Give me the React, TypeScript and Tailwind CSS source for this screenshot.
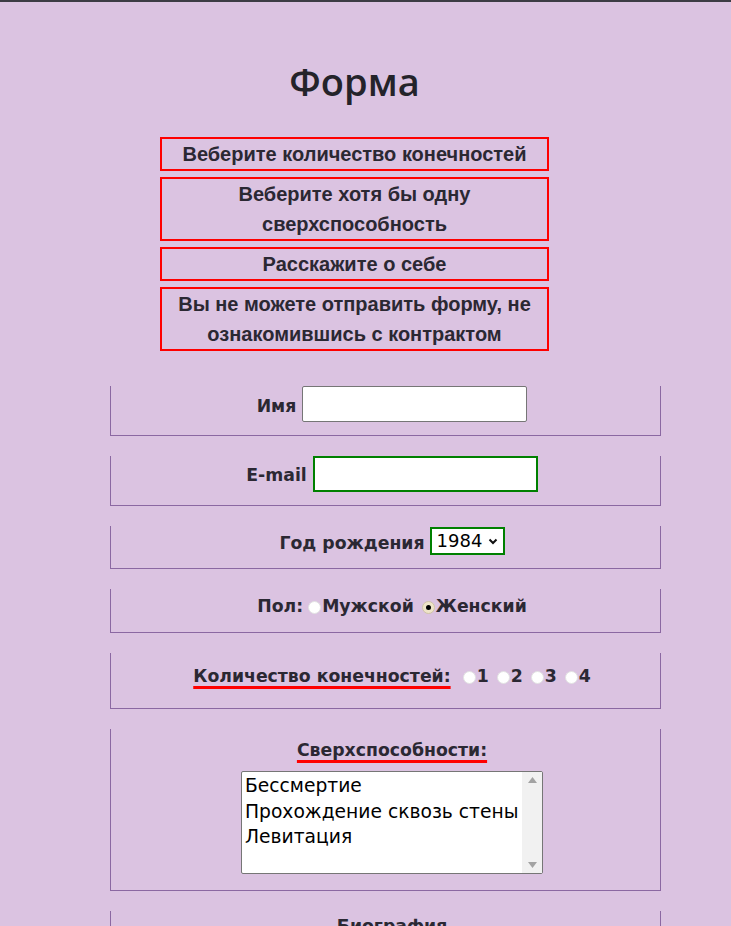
import React from "react";

const errors = [
  "Веберите количество конечностей",
  "Веберите хотя бы одну сверхспособность",
  "Расскажите о себе",
  "Вы не можете отправить форму, не ознакомившись с контрактом",
];

const powers = ["Бессмертие", "Прохождение сквозь стены", "Левитация"];

const label = "font-['DejaVu_Sans',sans-serif] font-bold text-[17.3px] text-[#2b2833]";

const Radio = ({ checked }: { checked?: boolean }) => (
  <span
    className={`inline-flex size-[13px] shrink-0 items-center justify-center rounded-full border ${
      checked ? "bg-[#efe4c8] border-[#cfc3a6]" : "bg-white border-[#e2e2e2]"
    }`}
  >
    {checked && <span className="size-[5px] rounded-full bg-black" />}
  </span>
);

const Field = ({ className, children }: { className: string; children: React.ReactNode }) => (
  <div className={`ml-[110px] w-[551px] border-x border-b border-[#8b68a2] pl-[13px] ${className}`}>
    {children}
  </div>
);

export default function App() {
  return (
    <div className="min-h-[926px] w-full border-t-2 border-[#3c3c44] bg-[#dbc3e1] pb-10">
      <div className="w-[709px]">
        <h1 className="pt-[57px] text-center font-['Open_Sans',sans-serif] text-[38px] font-semibold leading-[45px] text-[#24232a]">
          Форма
        </h1>

        <div className="mx-auto mt-[33px] flex w-[389px] flex-col gap-[6px]">
          {errors.map((e) => (
            <div
              key={e}
              className="border-2 border-[#ff0000] px-3 text-center font-['Liberation_Sans',Arial,sans-serif] text-[20px] font-bold leading-[30px] text-[#2b2833]"
            >
              {e}
            </div>
          ))}
        </div>
      </div>

      <div className="mt-[35px] flex flex-col gap-[20px]">
        <Field className="pb-[13px]">
          <div className="flex items-center justify-center gap-[6px]">
            <span className={`translate-y-[3px] ${label}`}>Имя</span>
            <div className="h-[36px] w-[225px] rounded-[2px] border border-[#767676] bg-white" />
          </div>
        </Field>

        <Field className="pb-[13px]">
          <div className="flex items-center justify-center gap-[6px]">
            <span className={`translate-y-[2px] ${label}`}>E-mail</span>
            <div className="h-[36px] w-[225px] border-2 border-[#008000] bg-white" />
          </div>
        </Field>

        <Field className="pb-[13px]">
          <div className="flex h-[29px] items-center justify-center gap-[5px]">
            <span className={`translate-y-[3px] ${label}`}>Год рождения</span>
            <div className="flex h-[28px] w-[75px] items-center justify-between border-2 border-[#008000] bg-white pl-[5px] pr-[4px]">
              <span className="font-['DejaVu_Sans',sans-serif] text-[18px] leading-none text-black">1984</span>
              <svg width="12" height="12" viewBox="0 0 12 12">
                <path d="M2.5 4.5 6 8l3.5-3.5" fill="none" stroke="#111" strokeWidth="2" />
              </svg>
            </div>
          </div>
        </Field>

        <Field className="pb-[13px]">
          <div className={`flex h-[30px] translate-y-[3px] items-center justify-center ${label}`}>
            <span className="mr-[5px]">Пол:</span>
            <Radio />
            <span className="ml-[1px] mr-[8px]">Мужской</span>
            <Radio checked />
            <span className="ml-[1px]">Женский</span>
          </div>
        </Field>

        <Field className="pb-[13px]">
          <div className={`flex h-[42px] translate-y-[3px] items-center justify-center ${label}`}>
            <span className="underline decoration-[#ff0000] decoration-[3px] underline-offset-[4px]">
              Количество конечностей:
            </span>
            {["1", "2", "3", "4"].map((n, i) => (
              <span key={n} className={`flex items-center ${i === 0 ? "ml-[12px]" : "ml-[8px]"}`}>
                <Radio />
                <span className="ml-[1px]">{n}</span>
              </span>
            ))}
          </div>
        </Field>

        <Field className="pb-[16px] pt-[8px]">
          <div className={`text-center leading-[26px] ${label}`}>
            <span className="underline decoration-[#ff0000] decoration-[3px] underline-offset-[4px]">
              Сверхспособности:
            </span>
          </div>
          <div className="mx-auto mt-[8px] flex h-[103px] w-[302px] rounded-[2px] border border-[#767676] bg-white">
            <div className="flex-1 overflow-hidden pl-[3px] pt-[1px] font-['DejaVu_Sans',sans-serif] text-[18.7px] leading-[25.5px] text-black">
              {powers.map((p) => (
                <div key={p} className="whitespace-nowrap">
                  {p}
                </div>
              ))}
            </div>
            <div className="flex w-[20px] flex-col items-center justify-between bg-[#f1f1f1] py-[5px]">
              <svg width="9" height="6" viewBox="0 0 9 6">
                <path d="M4.5 0 9 6H0z" fill="#a3a3a3" />
              </svg>
              <svg width="9" height="6" viewBox="0 0 9 6">
                <path d="M0 0h9L4.5 6z" fill="#a3a3a3" />
              </svg>
            </div>
          </div>
        </Field>

        <Field className="pb-[13px] pt-[2px]">
          <div className={`text-center leading-[26px] ${label}`}>Биография</div>
          <div className="mx-auto mt-[8px] h-[100px] w-[302px] border border-[#767676] bg-white" />
        </Field>
      </div>
    </div>
  );
}
